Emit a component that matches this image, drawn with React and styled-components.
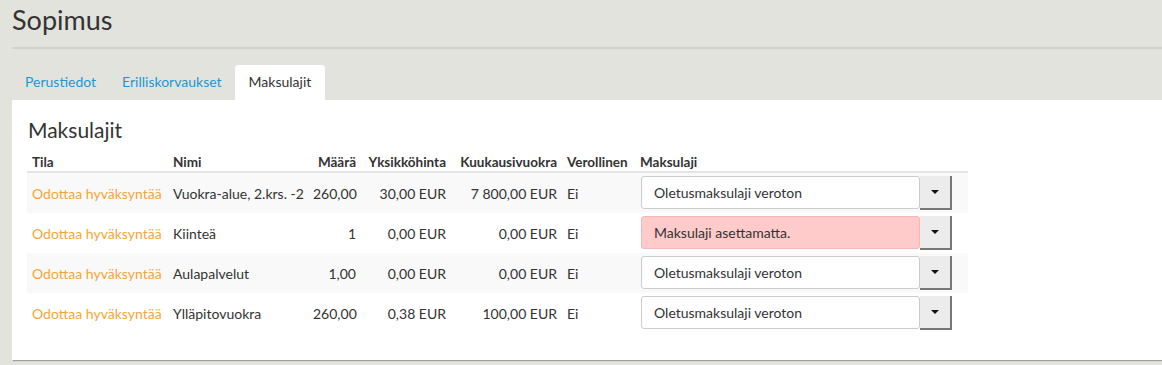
import React from 'react';
import styled, { createGlobalStyle } from 'styled-components';

const GlobalStyle = createGlobalStyle`
  html, body {
    margin: 0;
    padding: 0;
    background: #e3e3de;
    font-family: Lato, "Open Sans", sans-serif;
    color: #333;
    overflow: hidden;
  }
`;

const Page = styled.main`
  padding: 0 0 0 12px;
  height: 365px;
`;

const Title = styled.h1`
  margin: 0;
  padding-top: 3px;
  height: 44px;
  font-size: 27px;
  font-weight: 400;
  line-height: 34px;
  color: #333;
`;

const Rule = styled.hr`
  margin: 0 0 16px;
  border: 0;
  border-top: 2px solid #d2d2cd;
`;

const Tabs = styled.nav`
  display: flex;
  height: 35px;
  align-items: flex-end;
`;

const Tab = styled.a`
  display: block;
  height: 35px;
  padding: 0 ${(p) => (p.$active ? '14px' : '13px')};
  line-height: 33px;
  font-size: 14px;
  color: ${(p) => (p.$active ? '#333' : '#1b97d4')};
  background: ${(p) => (p.$active ? '#fff' : 'transparent')};
  border-radius: 4px 4px 0 0;
  text-decoration: none;
  cursor: pointer;
`;

const Panel = styled.section`
  background: #fff;
  padding: 17px 0 27px 15px;
  box-shadow: 1px 1px 1px rgba(0, 0, 0, 0.3);
`;

const Heading = styled.h2`
  margin: 0 0 5px 1px;
  font-size: 21px;
  font-weight: 400;
  line-height: 26px;
  color: #333;
`;

const Table = styled.table`
  border-collapse: collapse;
  table-layout: fixed;
  width: 941px;
  font-size: 14px;
`;

const Th = styled.th`
  text-align: ${(p) => (p.$right ? 'right' : 'left')};
  font-weight: 700;
  font-size: 13.5px;
  line-height: 17px;
  padding: 6px 5px 0;
  border-bottom: 2px solid #e4e4e4;
  white-space: nowrap;
  color: #333;
`;

const Row = styled.tr`
  background: ${(p) => (p.$striped ? '#f9f9f9' : '#fff')};
`;

const Td = styled.td`
  height: 40px;
  padding: 0 5px;
  text-align: ${(p) => (p.$right ? 'right' : 'left')};
  white-space: nowrap;
  color: ${(p) => (p.$status ? '#f6a535' : '#333')};
  vertical-align: middle;
`;

const SelectWrap = styled.div`
  display: flex;
  width: 311px;
  height: 34px;
  margin-left: 1px;
`;

const SelectBox = styled.div`
  flex: 1;
  display: flex;
  align-items: center;
  padding: 0 12px;
  border: 1px solid ${(p) => (p.$error ? '#f0b8b8' : '#ccc')};
  border-radius: 3px;
  background: ${(p) => (p.$error ? '#fecaca' : '#fff')};
  font-size: 14px;
  color: #333;
  box-sizing: border-box;
  height: 33px;
`;

const SelectButton = styled.button`
  width: 32px;
  height: 34px;
  border: 0;
  background: #ececec;
  box-shadow: inset -2px -2px 0 #777;
  display: flex;
  align-items: center;
  justify-content: center;
  padding: 0 2px 2px 0;
`;

const Caret = styled.span`
  width: 0;
  height: 0;
  border-left: 4px solid transparent;
  border-right: 4px solid transparent;
  border-top: 4px solid #111;
`;

const columns = [141, 140, 53, 90, 111, 73, 333];

const rows = [
  { name: 'Vuokra-alue, 2.krs. -2', qty: '260,00', unit: '30,00 EUR', month: '7 800,00 EUR', pay: 'Oletusmaksulaji veroton' },
  { name: 'Kiinteä', qty: '1', unit: '0,00 EUR', month: '0,00 EUR', pay: 'Maksulaji asettamatta.', error: true },
  { name: 'Aulapalvelut', qty: '1,00', unit: '0,00 EUR', month: '0,00 EUR', pay: 'Oletusmaksulaji veroton' },
  { name: 'Ylläpitovuokra', qty: '260,00', unit: '0,38 EUR', month: '100,00 EUR', pay: 'Oletusmaksulaji veroton' },
];

const PaymentSelect = ({ value, error }) => (
  <SelectWrap>
    <SelectBox $error={error}>{value}</SelectBox>
    <SelectButton>
      <Caret />
    </SelectButton>
  </SelectWrap>
);

const App = () => (
  <>
    <GlobalStyle />
    <Page>
      <Title>Sopimus</Title>
      <Rule />
      <Tabs>
        <Tab>Perustiedot</Tab>
        <Tab>Erilliskorvaukset</Tab>
        <Tab $active>Maksulajit</Tab>
      </Tabs>
      <Panel>
        <Heading>Maksulajit</Heading>
        <Table>
          <colgroup>
            {columns.map((w, i) => (
              <col key={i} style={{ width: w }} />
            ))}
          </colgroup>
          <thead>
            <tr>
              <Th>Tila</Th>
              <Th>Nimi</Th>
              <Th $right>Määrä</Th>
              <Th $right>Yksikköhinta</Th>
              <Th $right>Kuukausivuokra</Th>
              <Th>Verollinen</Th>
              <Th>Maksulaji</Th>
            </tr>
          </thead>
          <tbody>
            {rows.map((r, i) => (
              <Row key={r.name} $striped={i % 2 === 0}>
                <Td $status>Odottaa hyväksyntää</Td>
                <Td>{r.name}</Td>
                <Td $right>{r.qty}</Td>
                <Td $right>{r.unit}</Td>
                <Td $right>{r.month}</Td>
                <Td>Ei</Td>
                <Td>
                  <PaymentSelect value={r.pay} error={r.error} />
                </Td>
              </Row>
            ))}
          </tbody>
        </Table>
      </Panel>
    </Page>
  </>
);

export default App;
